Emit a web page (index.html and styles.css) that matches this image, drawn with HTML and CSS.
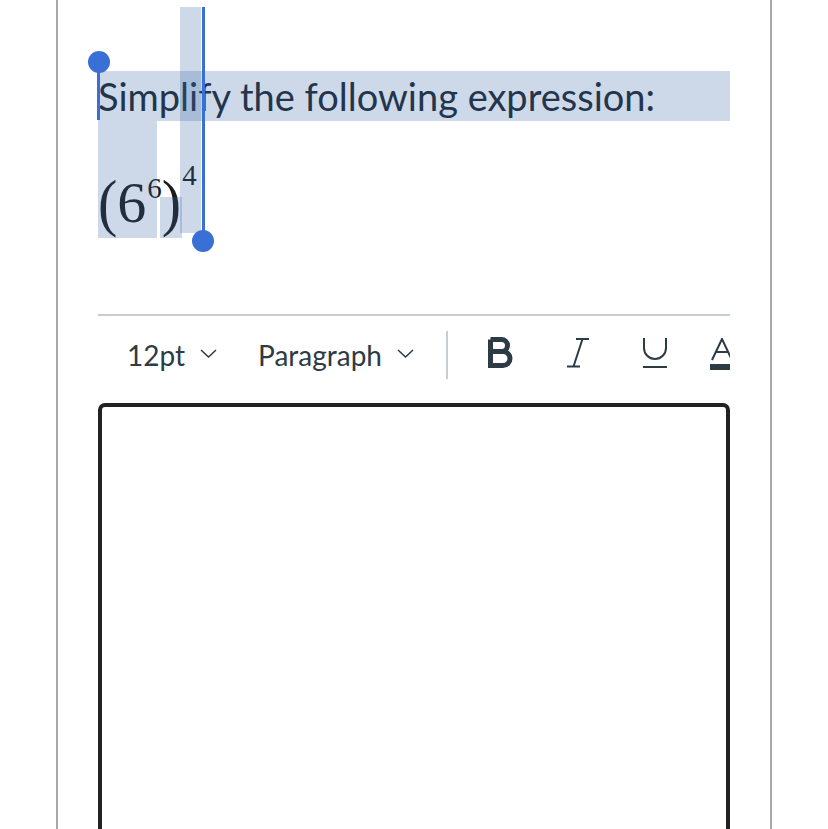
FILE: index.html
```html
<!DOCTYPE html>
<html lang="en">
<head>
<meta charset="utf-8">
<title>Question</title>
<link rel="stylesheet" href="styles.css">
</head>
<body>
<div class="panel">
  <div class="content">
    <p class="question">Simplify the following expression:</p>
    <div class="math"><span class="paren">(</span>6<span class="sup sup-inner">6</span><span class="paren">)</span><span class="sup sup-outer">4</span></div>

    <div class="hl hl-line"></div>
    <div class="hl hl-math"></div>
    <div class="hl hl-small"></div>
    <div class="hl hl-col"></div>
    <div class="caret caret-start"></div>
    <div class="knob knob-start"></div>
    <div class="caret caret-end"></div>
    <div class="knob knob-end"></div>

    <div class="toolbar">
      <div class="tb-item size">12pt
        <svg class="chev" width="17" height="9" viewBox="0 0 17 9"><polyline points="1,1 8.5,8 16,1" /></svg>
      </div>
      <div class="tb-item para">Paragraph
        <svg class="chev" width="17" height="9" viewBox="0 0 17 9"><polyline points="1,1 8.5,8 16,1" /></svg>
      </div>
      <div class="sep"></div>
      <svg class="icon icon-b" width="28" height="31" viewBox="0 0 28 31">
        <path d="M3.5 2.5 V28.5 H16 a7 7 0 0 0 0 -14 H3.5 M3.5 14.5 H14.5 a6 6 0 0 0 0 -12 H3.5" />
      </svg>
      <svg class="icon icon-i" width="22" height="31" viewBox="0 0 22 31">
        <path d="M9 2 H22 M0 29.5 H13 M15.5 2 L6.5 29.5" />
      </svg>
      <svg class="icon icon-u" width="26" height="31" viewBox="0 0 26 31">
        <path d="M2 1 V11 a11 11 0 0 0 22 0 V1 M1 30 H25" />
      </svg>
      <svg class="icon icon-a" width="28" height="33" viewBox="0 0 28 33">
        <path d="M2 22 L12 1 L22 22 M6 14 H18" />
        <rect x="0" y="26" width="28" height="6" />
      </svg>
    </div>

    <div class="editor"></div>
  </div>
</div>
</body>
</html>
```

FILE: styles.css
```css
html, body {
  margin: 0;
  padding: 0;
  background: #ffffff;
}

body {
  overflow: hidden;
  height: 829px;
}

.panel {
  margin-left: 56px;
  width: 716px;
  height: 829px;
  box-sizing: border-box;
  border-left: 2px solid #a9a9a9;
  border-right: 2px solid #a9a9a9;
  padding: 0 40px;
}

.content {
  position: relative;
  width: 632px;
}

.question {
  margin: 0;
  padding-top: 71px;
  font-family: Lato, "Noto Sans", sans-serif;
  font-size: 38px;
  line-height: 50px;
  color: #1b2530;
  white-space: nowrap;
}

.math {
  margin-top: 44px;
  height: 75px;
  line-height: 75px;
  font-family: "Liberation Serif", "Times New Roman", serif;
  font-size: 58px;
  color: #1b1b1b;
  white-space: nowrap;
}

.paren {
  display: inline-block;
  transform: scaleY(1.08);
}

.sup {
  font-size: 29px;
  line-height: 0;
  position: relative;
}

.sup-inner {
  top: -24px;
  margin-left: 1px;
}

.sup-outer {
  top: -37px;
  margin-left: 1px;
}

/* selection overlay */
.hl {
  position: absolute;
  background: rgba(55, 103, 163, 0.25);
  pointer-events: none;
}

.hl-line { left: 0; top: 71px; width: 632px; height: 50px; }
.hl-math { left: 0; top: 121px; width: 59px; height: 117px; }
.hl-small { left: 62px; top: 197px; width: 22px; height: 41px; }
.hl-col { left: 82px; top: 7px; width: 21px; height: 226px; }

.caret {
  position: absolute;
  background: #3a6fd6;
  width: 3px;
}

.caret-start { left: -1px; top: 61px; height: 59px; }
.caret-end { left: 104px; top: 7px; height: 230px; }

.knob {
  position: absolute;
  width: 22px;
  height: 22px;
  border-radius: 50%;
  background: #3a6fd6;
}

.knob-start { left: -10px; top: 51px; }
.knob-end { left: 94px; top: 230px; }

/* toolbar */
.toolbar {
  margin-top: 74px;
  border-top: 2px solid #c7cdd1;
  height: 77px;
  display: flex;
  align-items: center;
  overflow: hidden;
  font-family: Lato, "Noto Sans", sans-serif;
  font-size: 28px;
  color: #2d3b45;
}

.tb-item {
  display: flex;
  align-items: center;
  white-space: nowrap;
}

.size {
  margin-left: 29px;
}

.para {
  margin-left: 41px;
}

.chev {
  margin-left: 15px;
  margin-top: -3px;
  flex: none;
}

.chev polyline {
  fill: none;
  stroke: #2d3b45;
  stroke-width: 1.5;
}

.sep {
  width: 2px;
  height: 48px;
  background: #c7cdd1;
  margin-left: 32px;
  flex: none;
}

.icon {
  flex: none;
}

.icon path {
  fill: none;
  stroke: #2d3b45;
}

.icon-b { margin-left: 39px; margin-top: -5px; }
.icon-b path { stroke-width: 5; }

.icon-i { margin-left: 52px; margin-top: -5px; }
.icon-i path { stroke-width: 2; }

.icon-u { margin-left: 53px; margin-top: -5px; }
.icon-u path { stroke-width: 2; }

.icon-a { margin-left: 42px; margin-top: -1px; }
.icon-a path { stroke-width: 2; }
.icon-a rect { fill: #2d3b45; }

.editor {
  margin-top: 10px;
  height: 520px;
  border: 4px solid #222222;
  border-radius: 7px;
  box-sizing: border-box;
}
```
